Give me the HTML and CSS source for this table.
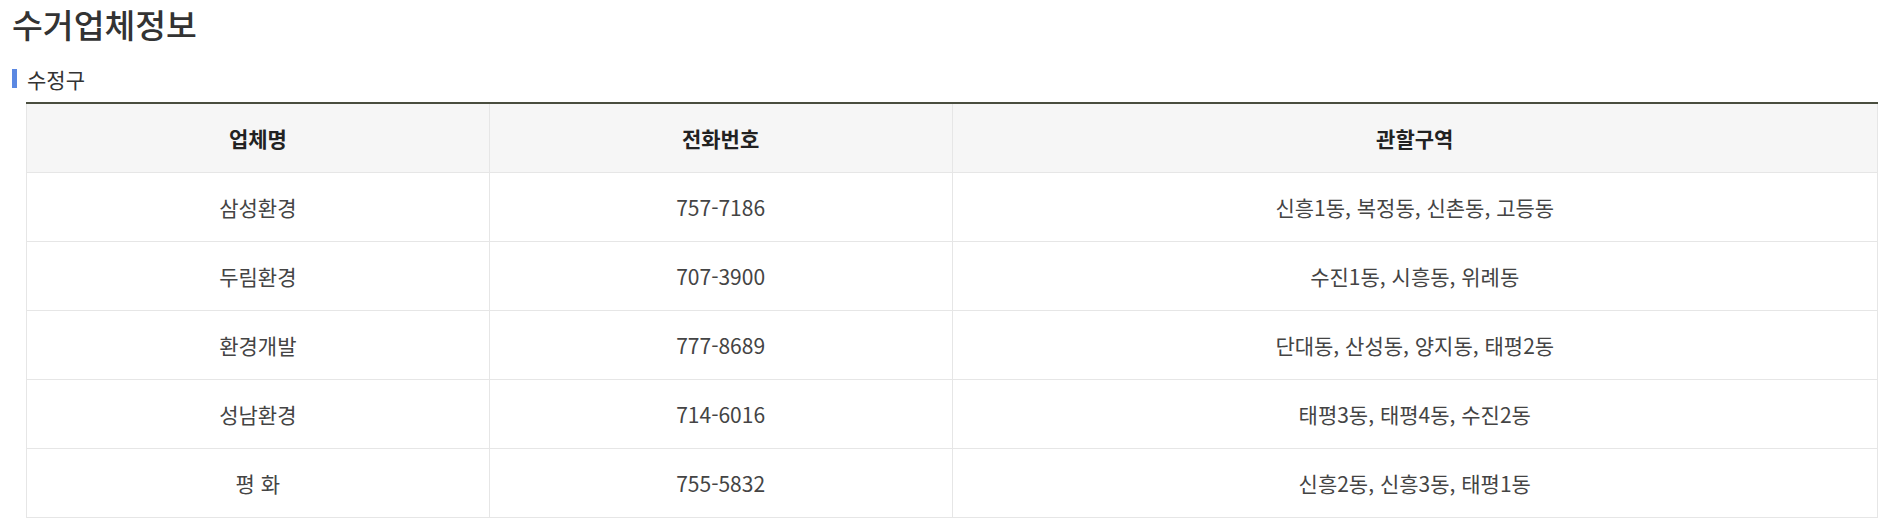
FILE: index.html
```html
<!DOCTYPE html>
<html lang="ko">
<head>
<meta charset="utf-8">
<title>수거업체정보</title>
<link rel="stylesheet" href="styles.css">
</head>
<body>
<div class="page">
  <h1 class="title">수거업체정보</h1>
  <h2 class="subtitle">수정구</h2>
  <table class="info-table">
    <colgroup>
      <col class="c1"><col class="c2"><col class="c3">
    </colgroup>
    <thead>
      <tr><th>업체명</th><th>전화번호</th><th>관할구역</th></tr>
    </thead>
    <tbody>
      <tr><td>삼성환경</td><td>757-7186</td><td>신흥1동, 복정동, 신촌동, 고등동</td></tr>
      <tr><td>두림환경</td><td>707-3900</td><td>수진1동, 시흥동, 위례동</td></tr>
      <tr><td>환경개발</td><td>777-8689</td><td>단대동, 산성동, 양지동, 태평2동</td></tr>
      <tr><td>성남환경</td><td>714-6016</td><td>태평3동, 태평4동, 수진2동</td></tr>
      <tr><td>평 화</td><td>755-5832</td><td>신흥2동, 신흥3동, 태평1동</td></tr>
    </tbody>
  </table>
</div>
</body>
</html>
```
FILE: styles.css
```css
html, body {
  margin: 0;
  padding: 0;
  background: #fff;
}
body {
  font-family: "Noto Sans CJK KR", "Noto Sans", sans-serif;
  color: #333;
}
.page {
  padding: 4px 16px 0 12px;
}
.title {
  margin: 0;
  font-size: 33.5px;
  font-weight: 500;
  line-height: 40px;
  color: #333;
}
.subtitle {
  margin: 21px 0 0 0;
  padding-left: 15px;
  position: relative;
  font-size: 21px;
  font-weight: 400;
  line-height: 28px;
  color: #333;
}
.subtitle::before {
  content: "";
  position: absolute;
  left: 0;
  top: 4px;
  width: 5px;
  height: 19px;
  background: #5b88e2;
}
.info-table {
  margin: 9px 0 0 14px;
  width: calc(100% - 14px);
  border-collapse: collapse;
  table-layout: fixed;
  border-top: 2px solid #4a4e3f;
}
.info-table .c1, .info-table .c2 { width: 25%; }
.info-table .c3 { width: 50%; }
.info-table th, .info-table td {
  height: 68px;
  padding: 0;
  text-align: center;
  font-size: 21px;
  border: 1px solid #e6e6e6;
}
.info-table thead th {
  border-top: none;
  background: #f6f6f6;
  font-weight: 700;
  color: #222;
}
.info-table td {
  color: #444;
}
```
